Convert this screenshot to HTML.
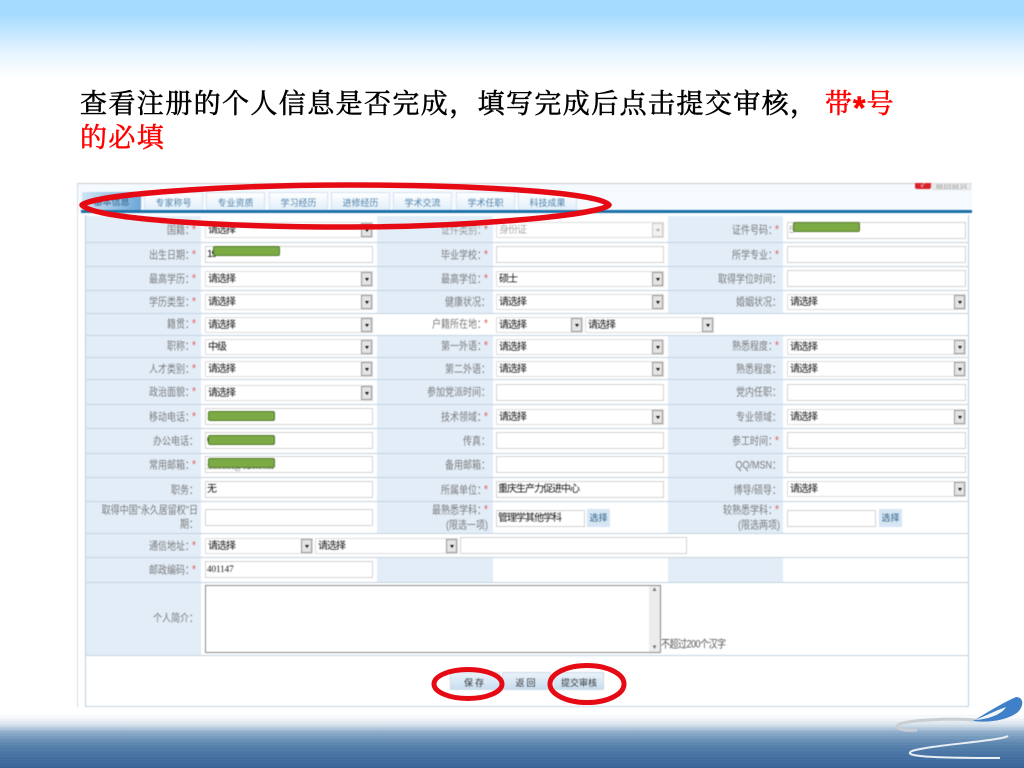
<!DOCTYPE html>
<html lang="zh"><head><meta charset="utf-8"><title>查看注册</title>
<style>
html,body{margin:0;padding:0;background:#fff}
#p{position:relative;width:1024px;height:768px;overflow:hidden;background:#fff;font-family:"Liberation Serif","Noto Serif CJK SC",serif}
#top{position:absolute;left:0;top:0;width:1024px;height:78px;background:linear-gradient(#a5dbff 0,#a5dbff 18%,#c4e7ff 42%,#e6f5ff 68%,#fff 100%)}
#bot{position:absolute;left:0;top:714px;width:1024px;height:54px;background:repeating-linear-gradient(180deg,rgba(255,255,255,.02) 0 1px,rgba(0,0,0,.015) 1px 3px),linear-gradient(#fff 0,#f8fafc 8%,#d8e4ee 20%,#8fadcb 34%,#5f88b2 54%,#4a76a6 72%,#38659a 100%)}
.t{position:absolute;font-size:27px;line-height:34px;font-weight:400;-webkit-text-stroke:.55px currentColor;white-space:nowrap;font-family:"Noto Serif CJK SC","Liberation Serif",serif;color:#000;letter-spacing:1.4px}
.r{color:#f00}
#f{position:absolute;left:0;top:0;width:1024px;height:768px;filter:blur(.45px);font-family:"Liberation Sans","Noto Sans CJK SC",sans-serif}
.a{position:absolute}
.b{position:absolute;background:#e2edf8}
.h{position:absolute;left:85px;width:884px;height:1px;background:#c5d3df}
.tab{position:absolute;top:192px;width:57px;height:18px;background:linear-gradient(#fff,#dfeefa);border:1px solid #d5e2ee;border-bottom:0;color:#4b7fa8;font-size:9px;line-height:21px;text-align:center}
.l{position:absolute;width:112px;text-align:right;font-size:9px;line-height:12px;color:#7a7a7a;white-space:nowrap;transform:scaleY(1.18)}
.l i{font-style:normal;color:#e65a5a;display:inline-block;width:8px;text-align:center;font-size:10px;margin-left:-4px}
.i,.s{position:absolute;box-sizing:border-box;background:#fff;border:1px solid #d2d2d2;height:17px;font-size:10px;letter-spacing:-1px;line-height:15px;color:#111;padding-left:1px;white-space:nowrap;overflow:hidden}
.s{height:16px;padding-left:2px;border:1px solid #ddd}
.s:after{content:"";position:absolute;right:0;top:0;bottom:0;width:11px;background:#e4e4e4;border:1px solid #999;box-sizing:border-box}
.s:before{content:"";position:absolute;z-index:1;right:3px;top:6px;border:2.5px solid transparent;border-top:3px solid #111;border-bottom:0}
.d:after{background:#f2f2f2;border-color:#ccc}.d:before{border-top-color:#aaa}
.c1{left:205px;width:168px}.c2{left:496px;width:168px}.c3{left:787px;width:179px}
.x1{left:86px}.x2{left:378px}.x3{left:669px}
.g{position:absolute;width:65px;height:8px;background:#7cab45;border:1px solid #55792f;border-radius:2px}
.btn{position:absolute;box-sizing:border-box;top:672px;height:18px;background:linear-gradient(#e9f3fb,#c9def0);border:1px solid #cdd9e4;color:#333;font-size:9px;line-height:20px;text-align:center}
.sel{position:absolute;width:23px;height:18px;background:#d6e6f4;color:#2f5f85;font-size:9px;line-height:18px;text-align:center}
</style></head><body><div id="p">
<div id="top"></div>
<div id="bot"></div>
<svg class="a" style="left:880px;top:690px" width="144" height="78" viewBox="880 690 144 78" fill="none">
<path d="M975 720C950 718 905 720 898 725C895 729 905 731 917 730" stroke="#c8ced2" stroke-width="3"/>
<path d="M1008 736C1000 741 930 745 912 751C902 756 925 758 1000 758" stroke="#e8eef3" stroke-width="2"/>
<path d="M973 721C985 714 1000 704 1016 697C1024 697 1024 706 1018 712C1008 720 990 723 973 721Z" fill="#3f80c8"/>
<path d="M975 720C985 716 995 711 1006 707C1002 714 990 719 975 720Z" fill="#f3f7fa"/>
</svg>
<div class="t" style="left:80px;top:85px">查看注册的个人信息是否完成，填写完成后点击提交审核，</div>
<div class="t r" style="left:825px;top:85px;letter-spacing:0">带<span style="font-family:'Liberation Sans',sans-serif;font-weight:700;font-size:32px;position:relative;top:6px;margin:0 1px">*</span>号</div>
<div class="t r" style="left:80px;top:119px">的必填</div>

<div id="f">
<div class="a" style="left:77px;top:183px;width:895px;height:524px;background:#fff;border-top:1px solid #ccc;border-left:1px solid #d5dde5;box-sizing:border-box"></div>
<div class="a" style="left:78px;top:184px;width:894px;height:26px;background:#f5fafe"></div>
<div class="a" style="left:915px;top:183px;width:16px;height:6px;background:#d8232a;border-radius:0 0 2px 2px;color:#fff;font-size:7px;line-height:5px;text-align:center">✓</div>
<div class="a" style="left:932px;top:183px;width:39px;height:7px;background:#ececec;border:1px solid #ddd;box-sizing:border-box;overflow:hidden;color:#999;font-size:8px;line-height:4px;text-align:center">返回首页</div>
<div class="tab" style="left:82px;width:59px;background:linear-gradient(90deg,#cfe4f5,#6ea7d6);border:0;height:19px;color:#2a5d88">基本信息</div>
<div class="tab" style="left:144px">专家称号</div>
<div class="tab" style="left:206px">专业资质</div>
<div class="tab" style="left:269px">学习经历</div>
<div class="tab" style="left:331px">进修经历</div>
<div class="tab" style="left:393px">学术交流</div>
<div class="tab" style="left:456px">学术任职</div>
<div class="tab" style="left:518px">科技成果</div>
<div class="a" style="left:81px;top:210px;width:891px;height:3px;background:#1c70a8"></div>

<div class="a" style="left:85px;top:215px;width:884px;height:491px;background:#fff;border-left:1px solid #b9cfe3;border-right:1px solid #b9cfe3;box-sizing:border-box"></div>
<div class="b" style="left:86px;top:216px;width:115px;height:366px"></div>
<div class="b" style="left:377px;top:216px;width:116px;height:97px"></div>
<div class="b" style="left:668px;top:216px;width:115px;height:97px"></div>
<div class="b" style="left:377px;top:335px;width:116px;height:198px"></div>
<div class="b" style="left:668px;top:335px;width:115px;height:198px"></div>
<div class="b" style="left:377px;top:557px;width:116px;height:25px"></div>
<div class="b" style="left:668px;top:557px;width:115px;height:25px"></div>
<div class="b" style="left:86px;top:582px;width:115px;height:73px"></div>

<div class="h" style="top:242px"></div><div class="h" style="top:266px"></div><div class="h" style="top:290px"></div><div class="h" style="top:313px"></div><div class="h" style="top:335px"></div><div class="h" style="top:357px"></div><div class="h" style="top:379px"></div><div class="h" style="top:404px"></div><div class="h" style="top:428px"></div><div class="h" style="top:453px"></div><div class="h" style="top:477px"></div><div class="h" style="top:501px"></div><div class="h" style="top:533px"></div><div class="h" style="top:557px"></div><div class="h" style="top:582px"></div><div class="h" style="top:655px"></div><div class="h" style="top:706px"></div>

<div class="l x1" style="top:224px">国籍：<i>*</i></div><div class="l x2" style="top:224px;color:#999">证件类别：<i>*</i></div><div class="l x3" style="top:224px">证件号码：<i>*</i></div>
<div class="l x1" style="top:249px">出生日期：<i>*</i></div><div class="l x2" style="top:249px">毕业学校：<i>*</i></div><div class="l x3" style="top:249px">所学专业：<i>*</i></div>
<div class="l x1" style="top:273px">最高学历：<i>*</i></div><div class="l x2" style="top:273px">最高学位：<i>*</i></div><div class="l x3" style="top:273px">取得学位时间：</div>
<div class="l x1" style="top:296px">学历类型：<i>*</i></div><div class="l x2" style="top:296px">健康状况：</div><div class="l x3" style="top:296px">婚姻状况：</div>
<div class="l x1" style="top:318px">籍贯：<i>*</i></div><div class="l x2" style="top:318px">户籍所在地：<i>*</i></div>
<div class="l x1" style="top:340px">职称：<i>*</i></div><div class="l x2" style="top:340px">第一外语：<i>*</i></div><div class="l x3" style="top:340px">熟悉程度：<i>*</i></div>
<div class="l x1" style="top:363px">人才类别：<i>*</i></div><div class="l x2" style="top:363px">第二外语：</div><div class="l x3" style="top:363px">熟悉程度：</div>
<div class="l x1" style="top:386px">政治面貌：<i>*</i></div><div class="l x2" style="top:386px">参加党派时间：</div><div class="l x3" style="top:386px">党内任职：</div>
<div class="l x1" style="top:411px">移动电话：<i>*</i></div><div class="l x2" style="top:411px">技术领域：<i>*</i></div><div class="l x3" style="top:411px">专业领域：</div>
<div class="l x1" style="top:435px">办公电话：</div><div class="l x2" style="top:435px">传真：</div><div class="l x3" style="top:435px">参工时间：<i>*</i></div>
<div class="l x1" style="top:459px">常用邮箱：<i>*</i></div><div class="l x2" style="top:459px">备用邮箱：</div><div class="l x3" style="top:459px">QQ/MSN：</div>
<div class="l x1" style="top:484px">职务：</div><div class="l x2" style="top:484px">所属单位：<i>*</i></div><div class="l x3" style="top:484px">博导/硕导：</div>
<div class="l x1" style="top:505px;white-space:normal">取得中国"永久居留权"日期：</div>
<div class="l x2" style="top:505px">最熟悉学科：<i>*</i><br><span style="margin-right:2px">(限选一项)</span></div>
<div class="l x3" style="top:505px">较熟悉学科：<i>*</i><br><span style="margin-right:1px">(限选两项)</span></div>
<div class="l x1" style="top:540px">通信地址：<i>*</i></div>
<div class="l x1" style="top:564px">邮政编码：<i>*</i></div>
<div class="l x1" style="top:612px">个人简介：</div>

<div class="s c1" style="top:222px">请选择</div><div class="s c2 d" style="top:222px;color:#aaa">身份证</div><div class="i c3" style="top:222px;color:#aaa">5</div><div class="a" style="left:845px;top:224px;font-size:9px;color:#999">X</div>
<div class="i c1" style="top:246px">19</div><div class="i c2" style="top:246px"></div><div class="i c3" style="top:246px"></div>
<div class="s c1" style="top:271px">请选择</div><div class="s c2" style="top:271px">硕士</div><div class="i c3" style="top:270px"></div>
<div class="s c1" style="top:294px">请选择</div><div class="s c2" style="top:294px">请选择</div><div class="s c3" style="top:294px">请选择</div>
<div class="s c1" style="top:317px">请选择</div><div class="s" style="left:496px;width:87px;top:317px">请选择</div><div class="s" style="left:585px;width:129px;top:317px">请选择</div>
<div class="s c1" style="top:339px">中级</div><div class="s c2" style="top:339px">请选择</div><div class="s c3" style="top:339px">请选择</div>
<div class="s c1" style="top:361px">请选择</div><div class="s c2" style="top:361px">请选择</div><div class="s c3" style="top:361px">请选择</div>
<div class="s c1" style="top:385px">请选择</div><div class="i c2" style="top:384px"></div><div class="i c3" style="top:384px"></div>
<div class="i c1" style="top:408px">1</div><div class="s c2" style="top:409px">请选择</div><div class="s c3" style="top:409px">请选择</div>
<div class="i c1" style="top:432px">0</div><div class="i c2" style="top:432px"></div><div class="i c3" style="top:432px"></div>
<div class="i c1" style="top:456px;line-height:19px;color:#555;font-family:'Liberation Serif',serif;font-size:9px;letter-spacing:0">xxxxxx@126.com</div><div class="i c2" style="top:456px"></div><div class="i c3" style="top:456px"></div>
<div class="i c1" style="top:481px">无</div><div class="i c2" style="top:481px">重庆生产力促进中心</div><div class="s c3" style="top:481px">请选择</div>
<div class="i c1" style="top:509px"></div><div class="i" style="left:496px;width:89px;top:510px">管理学其他学科</div><div class="sel" style="left:587px;top:509px">选择</div><div class="i" style="left:787px;width:89px;top:510px"></div><div class="sel" style="left:879px;top:509px">选择</div>
<div class="s" style="left:205px;width:108px;top:538px">请选择</div><div class="s" style="left:315px;width:143px;top:538px">请选择</div><div class="i" style="left:460px;width:227px;top:537px"></div>
<div class="i c1" style="top:561px;font-family:'Liberation Serif',serif;font-size:9px;letter-spacing:0">401147</div>

<div class="a" style="left:205px;top:585px;width:456px;height:68px;box-sizing:border-box;border:1px solid #8a8a8a;background:#fff"></div>
<div class="a" style="left:649px;top:586px;width:11px;height:66px;background:#ececec;color:#666;font-size:7px;text-align:center;line-height:8px">▴<div style="margin-top:50px">▾</div></div>
<div class="a" style="left:661px;top:638px;font-size:9px;line-height:12px;letter-spacing:-.5px;color:#555;white-space:nowrap;transform:scaleY(1.18)">不超过200个汉字</div>

<div class="btn" style="left:450px;width:50px;letter-spacing:2px">保存</div>
<div class="btn" style="left:502px;width:49px;letter-spacing:2px">返回</div>
<div class="btn" style="left:554px;width:50px">提交审核</div>

<div class="g" style="left:213px;top:246px"></div>
<div class="g" style="left:793px;top:222px"></div>
<div class="g" style="left:208px;top:411px"></div>
<div class="g" style="left:208px;top:435px"></div>
<div class="g" style="left:208px;top:458px"></div>
</div>

<svg class="a" style="left:0;top:0" width="1024" height="768" fill="none" stroke="#e60a14" stroke-linejoin="round">
<path d="M82 205C95 194 230 185 350 185C470 185 600 192 609 205C600 215 470 227 350 227C230 227 95 220 82 205Z" stroke-width="5.5"/>
<ellipse cx="468" cy="684" rx="34" ry="14.5" stroke-width="5"/>
<ellipse cx="587" cy="684" rx="37" ry="18.5" stroke-width="5"/>
</svg>
</div></body></html>
